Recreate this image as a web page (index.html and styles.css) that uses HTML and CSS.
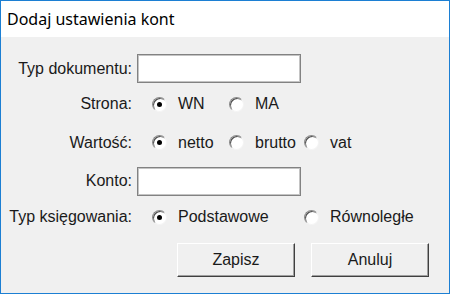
FILE: index.html
```html
<!DOCTYPE html>
<html lang="pl">
<head>
    <meta charset="UTF-8">
    <title>Dodaj ustawienia kont</title>
    <link rel="stylesheet" href="styles.css">
</head>
<body>
    <div class="window">
        <div class="titlebar">Dodaj ustawienia kont</div>

        <form class="form">
            <label class="label" for="docType">Typ dokumentu:</label>
            <div class="field-cell"><input type="text" id="docType" class="textbox"></div>

            <span class="label">Strona:</span>
            <div class="options">
                <span class="option"><span class="radio checked"></span>WN</span>
                <span class="option"><span class="radio"></span>MA</span>
            </div>

            <span class="label">Wartość:</span>
            <div class="options">
                <span class="option"><span class="radio checked"></span>netto</span>
                <span class="option"><span class="radio"></span>brutto</span>
                <span class="option"><span class="radio"></span>vat</span>
            </div>

            <label class="label" for="account">Konto:</label>
            <div class="field-cell"><input type="text" id="account" class="textbox"></div>

            <span class="label">Typ księgowania:</span>
            <div class="options">
                <span class="option wide"><span class="radio checked"></span>Podstawowe</span>
                <span class="option"><span class="radio"></span>Równoległe</span>
            </div>

            <div class="buttons">
                <button type="button" class="btn">Zapisz</button>
                <button type="button" class="btn">Anuluj</button>
            </div>
        </form>
    </div>
</body>
</html>
```

FILE: styles.css
```css
body {
    margin: 0;
    background: #ffffff;
    font-family: 'Liberation Sans', Arial, sans-serif;
    font-size: 16px;
    color: #1a1a1a;
}

.window {
    width: 448px;
    height: 292px;
    border: 1px solid #1c7fd3;
    background: #f0f0f0;
    display: flex;
    flex-direction: column;
}

.titlebar {
    height: 36px;
    background: #ffffff;
    font-family: 'Noto Sans', 'Open Sans', sans-serif;
    font-size: 16px;
    line-height: 36px;
    padding-left: 6px;
    color: #000000;
}

.form {
    display: grid;
    grid-template-columns: 131px 1fr;
    grid-template-rows: 29px 42px 35px 42px 30px 34px;
    column-gap: 5px;
    align-items: center;
    margin-top: 17px;
}

.label {
    text-align: right;
    white-space: nowrap;
}

.textbox {
    display: block;
    box-sizing: border-box;
    width: 164px;
    height: 29px;
    margin: 0;
    border: 1px solid #828282;
    box-shadow: inset 0 0 0 1px #c4c4c4;
    background: #ffffff;
    font: inherit;
    outline: none;
}

.options {
    display: grid;
    grid-template-columns: 77px 75px auto;
    padding-left: 15px;
}

.option {
    display: flex;
    align-items: center;
    gap: 11px;
    white-space: nowrap;
}

.option.wide {
    grid-column: span 2;
}

.radio {
    position: relative;
    box-sizing: border-box;
    width: 15px;
    height: 15px;
    border-radius: 50%;
    border: 1px solid;
    border-color: #8a8a8a #f4f4f4 #f4f4f4 #8a8a8a;
    background: #ffffff;
    box-shadow: inset 1px 1px 0 #505050;
}

.radio.checked::after {
    content: "";
    position: absolute;
    left: 4px;
    top: 4px;
    width: 5px;
    height: 5px;
    border-radius: 50%;
    background: #000000;
}

.buttons {
    grid-column: 1 / -1;
    align-self: stretch;
    margin-top: 11px;
    display: flex;
    justify-content: flex-end;
    gap: 16px;
    padding-right: 20px;
}

.btn {
    width: 118px;
    height: 34px;
    background: #f0f0f0;
    border: 1px solid;
    border-color: #ffffff #404040 #404040 #ffffff;
    box-shadow: inset -1px -1px 0 #a0a0a0;
    font: inherit;
    color: #1a1a1a;
    padding: 0;
}
```
